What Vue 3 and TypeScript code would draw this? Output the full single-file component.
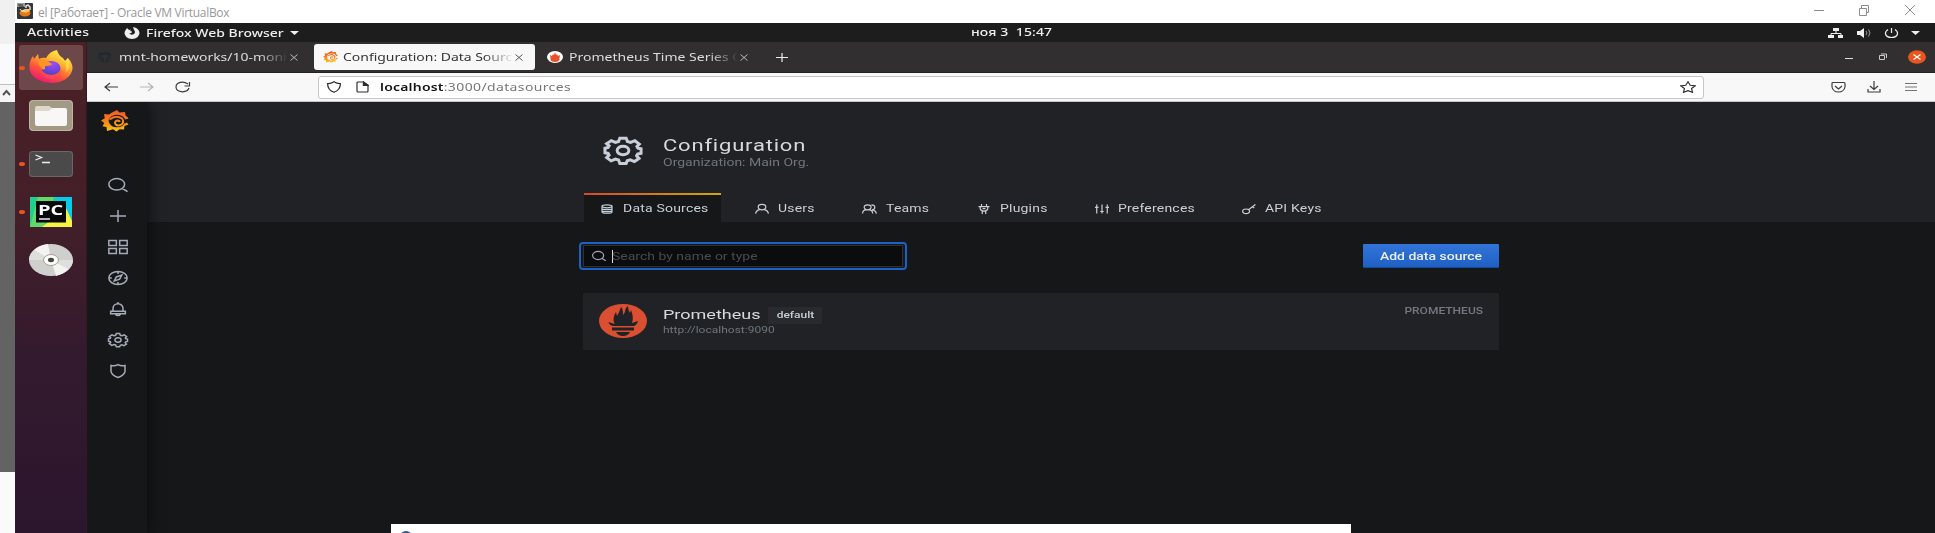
<script setup lang="ts">
interface PageTab { label: string; icon: string; lead: number; gap: number; width: number; iw: number; active?: boolean }

const pageTabs: PageTab[] = [
  { label: 'Data Sources', icon: 'db', lead: 17, iw: 12, gap: 10, width: 137, active: true },
  { label: 'Users', icon: 'user', lead: 34, iw: 14, gap: 9, width: 108 },
  { label: 'Teams', icon: 'users', lead: 33, iw: 15, gap: 9, width: 115 },
  { label: 'Plugins', icon: 'plug', lead: 34, iw: 12, gap: 10, width: 117 },
  { label: 'Preferences', icon: 'sliders', lead: 34, iw: 14, gap: 9, width: 146 },
  { label: 'API Keys', icon: 'key', lead: 35, iw: 14, gap: 9, width: 120 },
]
const menu: string[] = ['search', 'plus', 'apps', 'compass', 'bell', 'cog', 'shield']

const paths: Record<string, string> = {
  search: 'M10.500 1a9.500 9.800 0 1 1 0 19.600a9.500 9.800 0 1 1 0-19.600M17.500 18l6 5.500',
  plus: 'M12 0v24M0 12h24',
  apps: 'M1 1h9v8.500H1zM14 1h9v8.500h-9zM1 14.500h9V23H1zM14 14.500h9V23h-9z',
  compass: 'M12 1a11 11 0 1 1 0 22a11 11 0 1 1 0-22M12 1v4M12 19v4M1 12h3.500M19.500 12h3.500M16.500 7l-2.500 7-6.500 3.200 2.500-7z',
  bell: 'M12 0v3M4.500 16v-5a7.500 8 0 0 1 15 0v5M1 16h22v4H1zM8.500 21a3.600 3 0 0 0 7 0',
  cog: 'M10 1h4l.8 3 2 .8 2.700-1.500 2.800 3-1.500 2.200.6 1.500 2 .5v4l-2.200.7-.6 1.500 1.500 2.300-2.900 2.800-2.600-1.500-1.900.8L14 23.500h-4l-.8-3-2-.8-2.700 1.500-2.800-2.900 1.500-2.200-.6-1.500-2-.6v-4l2-.7.6-1.500L1.700 6l2.900-2.800 2.600 1.600 2-.8zM12 8.300a3.700 3.700 0 1 1 0 7.400a3.700 3.700 0 1 1 0-7.400',
  shield: 'M1.500 2.500q6 1.500 10.500-1.500 4.500 3 10.500 1.500v10.500q-1.500 6.500-10.500 10-9-3.500-10.500-10z',
  db: 'M2 5q0-3 10-3t10 3v14q0 3-10 3t-10-3zM2 5q0 4 10 4t10-4M2 13h20M2 17.500h20',
  user: 'M12 1a6.500 6.500 0 1 1 0 13a6.500 6.500 0 1 1 0-13M1 23q1-8 7-9.500M23 23q-1-8-7-9.500',
  users: 'M9 2a5.500 6 0 1 1 0 12a5.500 6 0 1 1 0-12M1 23q0-8 5.500-9.500M17 23q0-8-5.500-9.500M15 2q5.500 0 5.500 6t-4.500 6q6 1 7 9',
  plug: 'M7 0v6M17 0v6M1 6.500h22M4.500 7v5q1.500 5 7.500 5t7.500-5V7M8.500 17v7M15.500 17v7M9 11h6',
  sliders: 'M3 1v22M12 1v22M21 1v22M0 8h6M9 18h6M18 8h6',
  key: 'M7 12a6 5.500 0 1 1 0 11a6 5.500 0 1 1 0-11M11 14L23 1M18 6l3 4',
}
</script>

<template>
  <div class="screen">
    <aside class="host">
      <div class="host-a"></div>
      <div class="host-b"></div>
      <div class="host-c"><svg viewBox="0 0 9 8"><path d="M1 6l3.500-4L8 6" fill="none" stroke="#555" stroke-width="2" /></svg></div>
      <div class="host-d"></div>
      <div class="host-e"></div>
    </aside>
    <div class="vm">
      <header class="vm-title">
        <svg class="vm-icon" viewBox="0 0 16 16"><rect width="16" height="16" rx="1" fill="#33373a" /><path d="M0 0h8v4H0z" fill="#9b9c9b" /><path d="M1 2h5M2 4h5" stroke="#222" /><path d="M9 5V3l2-1 2 2v3" fill="none" stroke="#ddd" stroke-width="1.500" /><ellipse cx="8" cy="10" rx="5.500" ry="3.500" fill="#e87810" /><path d="M4 8q4 3 9 0l-1-2H8z" fill="#ffc56d" /><path d="M3 6q2 4 4 1" stroke="#eee" fill="none" /></svg>
        <span class="vm-name">el [Работает] - Oracle VM VirtualBox</span>
        <svg class="vm-btns" viewBox="0 0 102 12" fill="none" stroke="#8c8c8c" stroke-width="1"><path d="M0 6.500h10M45.500 4.500h7v7h-7zM47.500 4.500v-3h7v7h-2M91 1l10 10M101 1L91 11" /></svg>
      </header>
      <div class="topbar">
        <span class="t activities">Activities</span>
        <svg class="ffmono" viewBox="0 0 16 12"><path d="M1 4L3 1l2 2 2-.5Q5 4 8 4.500 8 7 5 6 7 9 10 7q2-2 0-4L9 0q6 1 6.500 6Q15 11.500 8 12 1 11.500.5 6z" fill="#eee" /></svg>
        <span class="t appname">Firefox Web Browser</span>
        <svg class="caret" viewBox="0 0 9 4"><path d="M0 0h9L4.500 4z" fill="#eee" /></svg>
        <span class="clock"><span class="t">ноя 3&nbsp; 15:47</span></span>
        <svg class="tray" viewBox="0 0 94 12">
          <path d="M5 1h6v3H5zM0 8h6v3H0zM10 8h5v3h-5z" fill="#eee" /><path d="M8 4v3M3 8V6.500h10V8" stroke="#eee" fill="none" />
          <path d="M29 4h3l4-3v10l-4-3h-3z" fill="#eee" /><path d="M38 4q2 2 0 4M40.500 2.500q3 3.500 0 7" stroke="#999" fill="none" />
          <path d="M60 2.500Q57 4.500 57.500 7q1 3.500 6 3.500t6-3.500Q70 4.500 67 2.500M63.500 1v5" stroke="#eee" stroke-width="1.200" fill="none" />
          <path d="M83 4h9l-4.500 4z" fill="#eee" />
        </svg>
      </div>
      <div class="desktop">
        <nav class="dock">
          <div class="slot focused"><i class="dot"></i>
            <svg class="d-firefox" viewBox="0 0 44 33"><defs><linearGradient id="fx" x1=".8" y1="0" x2=".25" y2="1"><stop offset="0" stop-color="#fff44f" /><stop offset=".35" stop-color="#ffb52b" /><stop offset=".65" stop-color="#ff5638" /><stop offset="1" stop-color="#e8127c" /></linearGradient><radialGradient id="fp" cx=".6" cy=".2" r=".8"><stop offset="0" stop-color="#a04cf5" /><stop offset="1" stop-color="#5242c8" /></radialGradient></defs><path d="M4 6l1 3L9 4l1 5q3-2 7-1Q21 1 28 0q1 5 6 8l2 3 3-3q6 7 4 13-4 11-20 12Q5 32 1 21-1 13 4 6z" fill="url(#fx)" /><path d="M27 2q2 6 9 10 3 6 0 11 7-6 3-15l-3 3q-5-4-9-9z" fill="#ffe14a" opacity=".75" /><ellipse cx="22" cy="18" rx="9.500" ry="7" fill="url(#fp)" /><path d="M9 9q5 0 8 1l6 4q-1 2-7 2 1 5-3 3-4-4-4-10z" fill="#ff9328" /><path d="M12 17q1 8 11 8 9-1 9-8 2 12-10 12-10-1-10-12z" fill="#ff4c55" opacity=".65" /></svg>
          </div>
          <div class="slot files"><svg viewBox="0 0 44 31"><rect width="44" height="31" rx="4" fill="#a39a86" /><rect x=".5" y=".5" width="43" height="30" rx="4" fill="none" stroke="#bdb5a3" /><path d="M6 8q0-2 2-2h12l3 2v4H6z" fill="#ded8ca" /><path d="M6 11h14l3-3h13q2 0 2 2v14q0 2-2 2H8q-2 0-2-2z" fill="#f8f7f5" /></svg></div>
          <div class="slot term"><i class="dot"></i><svg viewBox="0 0 44 26"><rect width="44" height="26" rx="3" fill="#4a4a4a" /><rect x=".5" y=".5" width="43" height="25" rx="3" fill="none" stroke="#686868" /><path d="M6.500 4l6 2.500-6 2.500M13 11.500h8" fill="none" stroke="#eee" stroke-width="1.300" /></svg></div>
          <div class="slot pc"><i class="dot"></i><div class="pycharm"><svg viewBox="0 0 42 30" preserveAspectRatio="none"><path d="M0 0h42v30H0z" fill="#20cf8c" /><path d="M24 0h18v22L32 10z" fill="#08c9ee" /><path d="M0 30L8 0h16L14 30zM13 30l20-22 9 22z" fill="#a6e34d" opacity=".5" /><path d="M12 30L36 11l6 13v6z" fill="#f7f43f" /><rect x="6" y="4" width="30" height="21.500" fill="#090909" /><path d="M9 22h11" stroke="#fff" stroke-width="1.400" /></svg><span class="t pctext">PC</span></div></div>
          <div class="slot disc"><svg viewBox="0 0 44 32"><ellipse cx="22" cy="16" rx="22" ry="16" fill="#cfcfcd" /><path d="M22 16L5 6Q10 1 19 0zM22 16l18 9q-5 5-13 7z" fill="#f3f3f1" /><path d="M22 16L0 16q0-6 5-10zM22 16h22q0 5-4 9z" fill="#dededc" /><ellipse cx="22" cy="16" rx="7.500" ry="5.500" fill="#fbfbf8" stroke="#a5a18f" /><ellipse cx="22" cy="16" rx="3" ry="2.200" fill="#444" /></svg></div>
        </nav>
        <section class="browser">
          <div class="tabs">
            <div class="tab first"><svg class="gh" viewBox="0 0 16 12"><path d="M6 11V8Q3 7.500 3.500 4L3.300 2l2 1h5l2-1-.3 2Q13 7.500 10 8v3" fill="none" stroke="#20282d" stroke-width="1.500" /><ellipse cx="8" cy="6" rx="7" ry="5.200" fill="none" stroke="#252b2f" /></svg><span class="clip"><span class="t l1">mnt-homeworks/10-moni</span></span><svg class="x" viewBox="0 0 8 7"><path d="M.5.5l7 6M7.500.5l-7 6" /></svg></div>
            <div class="tab second"><svg class="gf" viewBox="0 0 28 22" preserveAspectRatio="none"><use href="#grafana" /></svg><span class="clip"><span class="t l2">Configuration: Data Sourc</span></span><svg class="x" viewBox="0 0 8 7"><path d="M.5.5l7 6M7.500.5l-7 6" /></svg></div>
            <div class="tab third"><svg class="pm" viewBox="0 0 16 12"><ellipse cx="8" cy="6" rx="8" ry="6" fill="#fff" /><path d="M3.500 7L3 4l2 1 1-2 1 1 1-3 1 3 1-1 1 2 2-1-.5 3v2q-1 2-4.500 2T3.500 9z" fill="#e6522c" /></svg><span class="clip"><span class="t l3">Prometheus Time Series C</span></span><svg class="x" viewBox="0 0 8 7"><path d="M.5.5l7 6M7.500.5l-7 6" /></svg></div>
            <svg class="newtab" viewBox="0 0 12 9"><path d="M0 4.500h12M6 0v9" stroke="#eee" stroke-width="1.200" /></svg>
            <svg class="wbtns" viewBox="0 0 82 14"><path d="M0 8.500h8" stroke="#ddd" /><path d="M34.500 5.500h5v4h-5zM36 4h5.500v4" fill="none" stroke="#ccc" /><ellipse cx="72" cy="7" rx="9" ry="6.700" fill="#e95420" /><path d="M68.500 4.500l7 5M75.500 4.500l-7 5" stroke="#fff" stroke-width="1.200" /></svg>
          </div>
          <div class="toolbar">
            <svg class="navs" viewBox="0 0 88 12" fill="none" stroke-width="1.200"><path d="M14 6H1M6 2L1 6l5 4" stroke="#3c3c3c" /><path d="M36 6h13M44 2l5 4-5 4" stroke="#b5b5b5" /><path d="M84 3Q81 1 78 1.200 72 1.800 72 6t6.500 4.800Q84 10.500 85 7M85.500 1v4h-5" stroke="#3c3c3c" /></svg>
            <div class="url">
              <svg class="urlicons" viewBox="0 0 42 12" fill="none" stroke="#2d2d2d" stroke-width="1.200"><path d="M7 .8q3 2 6.400 1.800Q13.500 9 7 11.300.500 9 .6 2.600 4 2.800 7 .8z" /><path d="M30 2q0-1 1-1h5.500L41 4v6q0 1-1 1h-9q-1 0-1-1zM36.500 1v3.500H41" /><path d="M36.500 1v3.500H41z" fill="#2d2d2d" /></svg>
              <span class="t address"><b>localhost</b>:3000/datasources</span>
              <svg class="star" viewBox="0 0 16 12"><path d="M8 .8l2.200 3.500 5 .5-3.600 2.800.9 3.700L8 9.600l-4.500 1.700.9-3.700L.8 4.800l5-.5z" fill="none" stroke="#333" stroke-width="1.200" /></svg>
            </div>
            <svg class="tools" viewBox="0 0 86 12" fill="none" stroke="#3c3c3c" stroke-width="1.200"><path d="M2 1.500h11q1 0 1 1V6q-1 5-6.500 5T1 6V2.500q0-1 1-1zM4 5l3.500 3L11 5M43 0v8M39 5l4 3.500L47 5M37 8v3h12V8" /><path d="M74 2.500h12M74 6h12M74 9.500h12" stroke="#777" /></svg>
          </div>
          <div class="page">
            <nav class="side">
              <svg class="logo" viewBox="0 0 28 22"><defs><linearGradient id="gg" gradientUnits="userSpaceOnUse" x1="0" y1="0" x2="0" y2="22"><stop offset="0" stop-color="#f05a28" /><stop offset=".45" stop-color="#f57b20" /><stop offset="1" stop-color="#fbca0a" /></linearGradient></defs>
                <g id="grafana"><path d="M11 2.500L16 0l2.500 2.500 5.500-.5.5 3.500q3 1.500 3.500 4.500l-3 1 2.500 3.500-4 1.500-.5 3.500-4.500-.3-3 2.300-3.500-2.300-6 1.800-.5-4-4-.8 1.800-3.200L0 10.500l3.800-2.200L3 4l5 .5z" fill="url(#gg)" /><ellipse cx="16" cy="11" rx="8.300" ry="6.300" fill="currentColor" /><path d="M24 13.500l4-2v-3l-4 1z" fill="currentColor" /><path d="M8.500 9.500Q15 4.500 21 8.500q2.500 3.500-.5 6-3.500 2-6-.3-1.500-2.700 1.700-3.700 2.300 0 2.500 1.500" fill="none" stroke="url(#gg)" stroke-width="2" /></g></svg>
              <svg v-for="m in menu" :key="m" :class="['mi', 'mi-' + m]" viewBox="0 0 24 24" preserveAspectRatio="none"><path :d="paths[m]" /></svg>
            </nav>
            <main class="main">
              <div class="head">
                <div class="ident"><svg class="gear" viewBox="0 0 24 24" preserveAspectRatio="none"><path :d="paths.cog" /></svg>
                  <div class="titles"><h1><span class="t">Configuration</span></h1><p><span class="t">Organization: Main Org.</span></p></div></div>
                <div class="ptabs">
                  <div v-for="p in pageTabs" :key="p.label" :class="['ptab', { active: p.active }]" :style="{ width: p.width + 'px', paddingLeft: p.lead + 'px', gap: p.gap + 'px' }">
                    <svg viewBox="0 0 24 24" preserveAspectRatio="none" :style="{ width: p.iw + 'px' }"><path :d="paths[p.icon]" /></svg><span class="t">{{ p.label }}</span>
                  </div>
                </div>
              </div>
              <div class="body">
                <div class="actions">
                  <div class="search"><div class="inner"><svg viewBox="0 0 24 24" preserveAspectRatio="none"><path :d="paths.search" /></svg><i class="cursor"></i><span class="t">Search by name or type</span></div></div>
                  <button class="add"><span class="t">Add data source</span></button>
                </div>
                <article class="card">
                  <svg class="prom" viewBox="0 0 48 34"><ellipse cx="24" cy="17" rx="24" ry="17" fill="#da4e31" /><path d="M9.500 18l6 2Q13 14 17 8l1 4q2-3 4-9 2 1 2 8l2-3q0-4 3-6 0 4 2 7l1-3q3 7 1 13l6-2q-1 4-4 5H14q-4-1-4.500-4zM13 23.500h22v3H13zM17 28h14q-2 4-7 4t-7-4z" fill="#202226" /></svg>
                  <div class="info"><div class="line"><span class="t name">Prometheus</span><span class="badge"><span class="t">default</span></span></div><div class="link"><span class="t">http://localhost:9090</span></div></div>
                  <span class="t type">PROMETHEUS</span>
                </article>
              </div>
            </main>
          </div>
        </section>
      </div>
    </div>
    <div class="popup"><svg viewBox="0 0 14 3"><path d="M0 3Q3 0 7 0t7 3z" fill="#35598c" /></svg></div>
  </div>
</template>

<style>
html, body { margin: 0; overflow: hidden; }
</style>
<style scoped>
* { box-sizing: border-box; }
svg { display: block; flex: none; }
.screen { width: 1935px; height: 533px; display: flex; position: relative; overflow: hidden; background: #161719; }
.t { display: inline-block; transform: scaleY(.72); white-space: nowrap; flex: none; }
.host { width: 15px; flex: none; }
.host-a { height: 44px; background: #f0f0f0; }
.host-b { height: 40px; background: #fafafc; }
.host-c { height: 18px; background: #f5f5f5; border-top: 1px solid #c0c0c0; padding: 4px 0 0 2px; }
.host-c svg { width: 9px; height: 8px; }
.host-d { height: 370px; background: #636363; }
.host-e { height: 61px; background: #fafafa; }
.vm { width: 1920px; display: flex; flex-direction: column; }
.vm-title { height: 23px; background: #fff; display: flex; align-items: center; padding-left: 2px; flex: none; }
.vm-icon { width: 16px; height: 16px; margin-top: -1px; }
.vm-name { font: 12px "Open Sans", "Noto Sans", sans-serif; color: #999; margin-left: 5px; letter-spacing: -.3px; line-height: 23px; padding-top: 1px; }
.vm-btns { width: 102px; height: 12px; margin-left: auto; margin-right: 19px; margin-top: -3px; }
.topbar { height: 19px; background: #1d1d1d; display: flex; align-items: center; padding-left: 12px; color: #eee; position: relative; font: 500 14px "Noto Sans", sans-serif; flex: none; }
.activities { width: 62px; letter-spacing: .2px; }
.ffmono { width: 16px; height: 12px; margin-left: 35px; }
.appname { margin-left: 6px; width: 138px; margin-top: 1px; }
.caret { width: 9px; height: 4px; margin-left: 6px; }
.clock { position: absolute; left: 956px; top: 0; line-height: 19px; letter-spacing: .1px; }
.tray { width: 94px; height: 12px; margin-left: auto; margin-right: 13px; }
.desktop { display: flex; height: 491px; }
.dock { width: 72px; flex: none; background: linear-gradient(180deg, #4c2025 0, #431f29 35%, #331a2e 65%, #2c162e 100%); padding-top: 3px; border-right: 1px solid #3a1621; }
.slot { width: 64px; margin-left: 4px; position: relative; display: flex; justify-content: center; }
.focused { height: 45px; border-radius: 3px; background: #6c484b; padding-top: 5px; }
.dot { position: absolute; left: 0; width: 6px; height: 4px; border-radius: 50%; background: #e95420; top: 50%; margin-top: -2px; }
.d-firefox { width: 44px; height: 33px; }
.files { margin-top: 10px; height: 31px; }
.files svg { width: 44px; height: 31px; }
.term { margin-top: 20px; height: 26px; }
.term svg { width: 44px; height: 26px; }
.pc { margin-top: 20px; height: 30px; }
.pycharm { width: 42px; height: 30px; display: grid; }
.pycharm > * { grid-area: 1 / 1; }
.pycharm svg { width: 42px; height: 30px; }
.pctext { font: bold 20px/18px "Open Sans", sans-serif; color: #fff; margin: 3px 0 0 8px; z-index: 1; justify-self: start; }
.disc { margin-top: 17px; }
.disc svg { width: 44px; height: 32px; }
.browser { width: 1848px; display: flex; flex-direction: column; }
.tabs { height: 31px; background: #322f30; border-bottom: 1px solid #232122; display: flex; align-items: center; font: 14px "Noto Sans", sans-serif; color: #ddd; flex: none; }
.tab { height: 26px; display: flex; align-items: center; border-radius: 3px; flex: none; }
.first { width: 227px; padding-left: 10px; }
.second { width: 221px; padding-left: 9px; background: #f8f8f8; color: #333; }
.third { width: 241px; padding-left: 12px; }
.clip { height: 24px; line-height: 25px; flex: none; margin-left: 6px; width: 168px; -webkit-mask-image: linear-gradient(90deg, #000 83%, transparent 101%); mask-image: linear-gradient(90deg, #000 83%, transparent 101%); }
.second .clip { margin-left: 5px; width: 169px; }
.l1 { letter-spacing: -.02px; }
.l2 { letter-spacing: -.03px; }
.gh, .pm { width: 16px; height: 12px; }
.gf { width: 15px; height: 12px; color: #f8f8f8; }
.x { width: 8px; height: 7px; margin-left: 3px; stroke: #bbb; }
.second .x { stroke: #555; }
.newtab { width: 12px; height: 9px; margin-left: 0; }
.wbtns { width: 82px; height: 14px; margin-left: auto; margin-right: 8px; }
.toolbar { height: 29px; background: #f8f8f8; border-bottom: 1px solid #c6c6c8; display: flex; align-items: center; flex: none; }
.navs { width: 88px; height: 12px; margin-left: 17px; }
.url { width: 1386px; height: 23px; border: 1px solid #c6c6c8; border-radius: 3px; background: #fff; margin-left: 126px; display: flex; align-items: center; padding: 0 7px 0 8px; }
.urlicons { width: 42px; height: 12px; }
.address { font: 14px "Noto Sans", sans-serif; color: #777; margin-left: 11px; letter-spacing: .37px; margin-top: 1px; }
.address b { color: #151515; font-weight: 600; letter-spacing: .2px; }
.star { width: 16px; height: 12px; margin-left: auto; }
.tools { width: 86px; height: 12px; margin-left: 127px; }
.page { flex: 1; display: flex; overflow: hidden; }
.side { width: 60px; background: #161719; display: flex; flex-direction: column; z-index: 1; box-shadow: 0 0 14px #0a0a0b; padding-top: 8px; flex: none; }
.logo { width: 28px; height: 22px; margin: 0 0 46px 14px; color: #161719; }
.mi { width: 20px; height: 14px; margin: 0 0 17px 21px; fill: none; stroke: #a5abb8; overflow: visible; flex: none; }
.mi-plus, .mi-bell, .mi-shield { width: 16px; margin-left: 23px; }
.mi-plus { height: 12px; margin-top: 1px; margin-bottom: 18px; }
.mi path, .gear path, .ptab path { vector-effect: non-scaling-stroke; stroke-width: 1.500px; }
.main { flex: 1; background: #161719; font-family: Roboto, sans-serif; }
.head { height: 120px; background: #202226; padding-left: 437px; }
.ident { height: 91px; padding: 34px 0 0 19px; display: flex; }
.gear { width: 38px; height: 27px; fill: none; stroke: #c7d0d9; overflow: visible; margin: 1px; }
.ident .gear path { stroke-width: 3px; }
.titles { margin-left: 20px; }
h1 { font-size: 22px; font-weight: 400; line-height: 20px; margin: 0; color: #d8d9da; height: 18px; }
h1 .t { letter-spacing: .8px; }
p { margin: 0; font-size: 14px; line-height: 16px; color: #6e7680; }
.ptabs { display: flex; height: 29px; }
.ptab { display: flex; align-items: center; font-size: 14px; color: #c7d0d9; flex: none; }
.ptab .t { margin-top: 1px; letter-spacing: .2px; }
.ptab svg { height: 10px; fill: none; stroke: #c7d0d9; overflow: visible; margin-top: 3px; }
.ptab svg path { stroke-width: 1.200px; }
.ptab.active { background: #161719; border-top: 2px solid; border-image: linear-gradient(90deg, #d44a2a, #d0a90b) 1; }
.ptab.active .t { margin-top: -1px; }
.ptab.active svg { margin-top: 0; }
.body { padding: 20px 0 0 432px; width: 1352px; }
.actions { display: flex; align-items: center; justify-content: space-between; height: 28px; }
.search { width: 328px; height: 28px; border: 2px solid #1f60c4; border-radius: 4px; padding: 1px 2px; }
.inner { height: 22px; border: 1px solid #2c3235; background: #0b0c0e; display: flex; align-items: center; padding-left: 8px; font-size: 14px; color: #464c54; }
.inner svg { width: 14px; height: 10px; fill: none; stroke: #9fa7b3; overflow: visible; }
.inner svg path { vector-effect: non-scaling-stroke; stroke-width: 1.200px; }
.cursor { width: 1px; height: 13px; background: #ddd; margin-left: 6px; }
.inner .t { margin-left: -1px; }
.add { width: 136px; height: 24px; border: 0; border-bottom: 1px solid #174996; border-radius: 1px; background: linear-gradient(#3274d9, #1f60c4); color: #e9eef8; font: 500 14px Roboto, sans-serif; padding: 0; }
.card { width: 916px; height: 57px; margin: 23px 0 0 4px; background: #202226; display: flex; padding: 11px 16px 0; border-radius: 1px; }
.prom { width: 48px; height: 34px; }
.info { margin-left: 16px; }
.line { display: flex; height: 20px; align-items: center; }
.name { font-size: 18px; color: #d8d9da; }
.badge { width: 54px; height: 17px; margin-left: 8px; margin-top: 2px; background: #292a2d; display: flex; align-items: center; justify-content: center; font-size: 12px; font-weight: 500; color: #c7d0d9; }
.link { font-size: 12px; color: #6e7680; line-height: 13px; }
.type { margin-left: auto; font-size: 12px; font-weight: 500; color: #737980; height: 14px; line-height: 14px; }
.popup { position: absolute; left: 391px; top: 524px; width: 960px; height: 9px; background: #fff; padding: 7px 0 0 8px; }
.popup svg { width: 14px; height: 2px; }
</style>
